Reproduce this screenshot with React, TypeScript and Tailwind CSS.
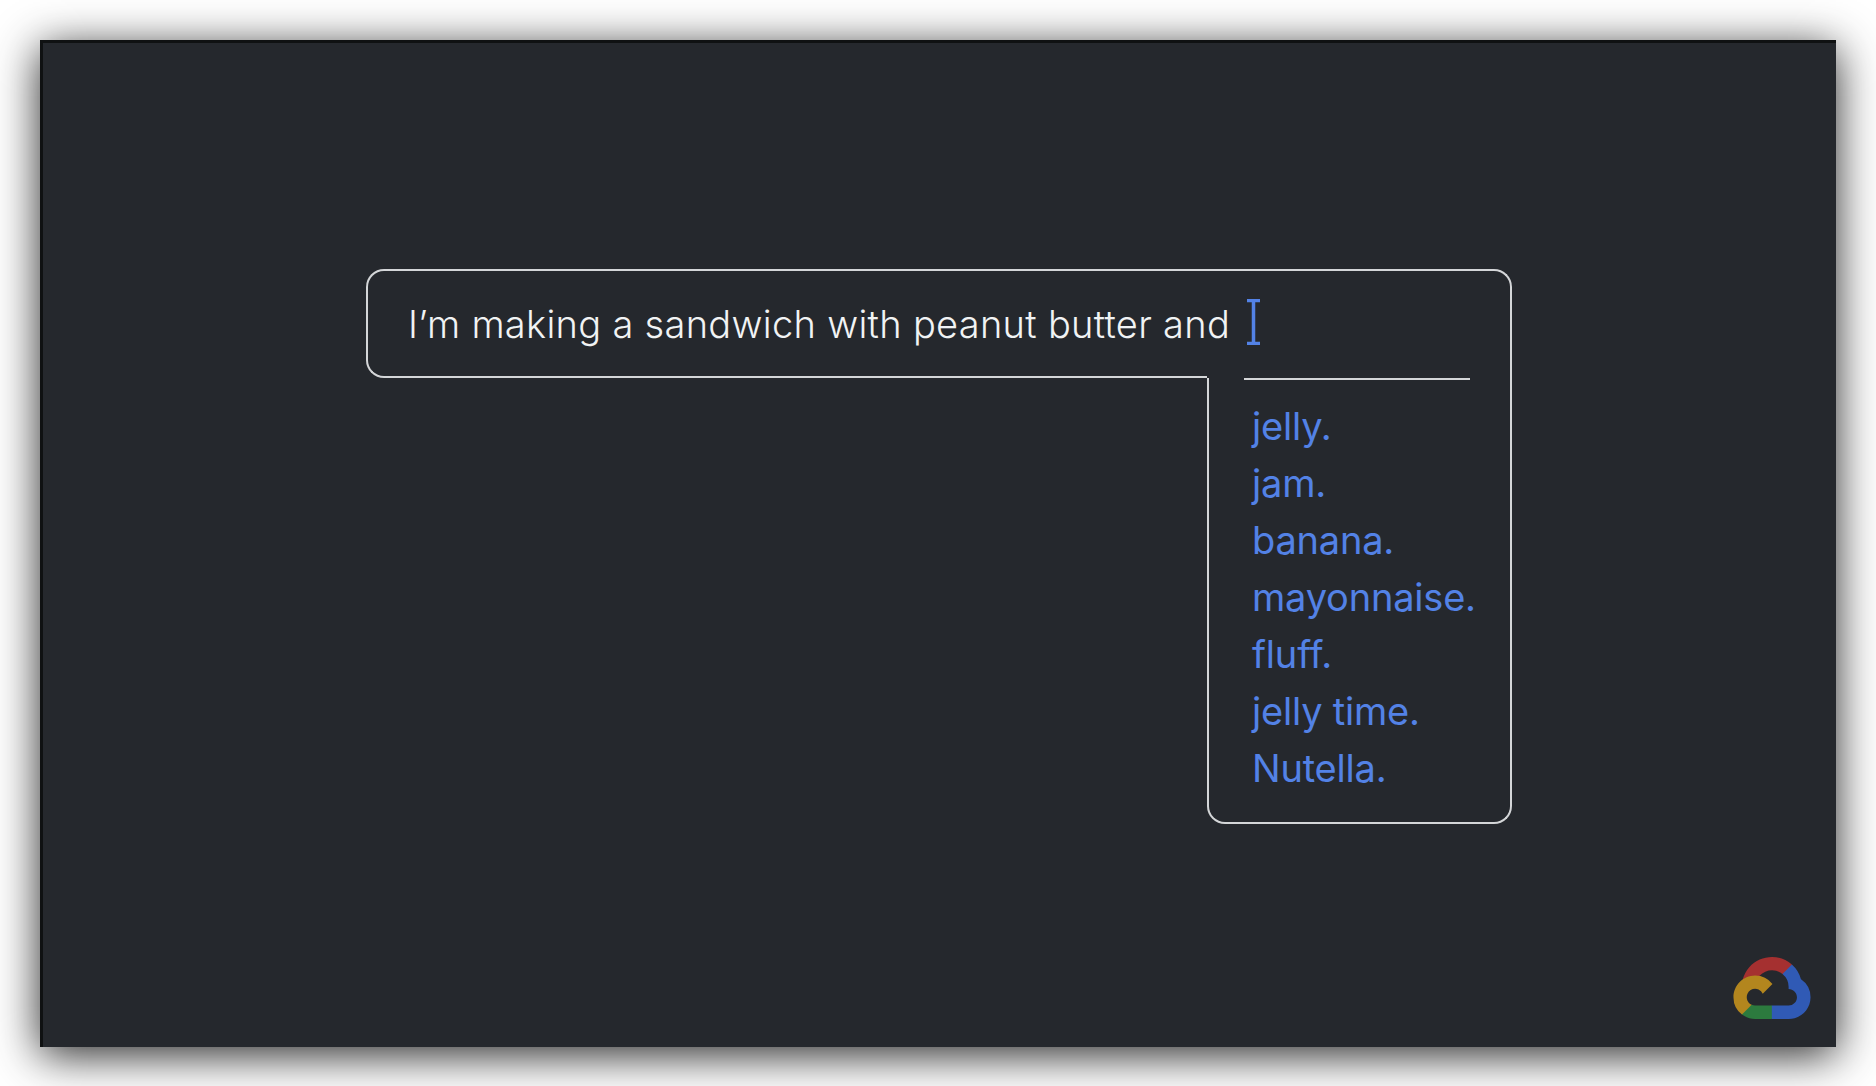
const SUGGESTIONS = ["jelly.", "jam.", "banana.", "mayonnaise.", "fluff.", "jelly time.", "Nutella."];

function CloudLogo() {
  return (
    <svg viewBox="0 0 256 206" className="block h-[62px] w-[78px]">
      <path fill="#a53030" d="M170.252 56.819l22.253-22.253 1.483-9.37C153.437-11.677 88.976-7.496 52.42 33.92 42.267 45.423 34.734 59.764 30.717 74.573l7.97-1.123 44.505-7.34 3.436-3.513c19.797-21.742 53.27-24.667 76.128-6.168l7.496.39z" />
      <path fill="#305ab5" d="M224.205 73.918a100.249 100.249 0 00-30.217-48.722l-31.232 31.232a55.515 55.515 0 0120.379 44.037v5.544c15.35 0 27.797 12.445 27.797 27.796 0 15.352-12.446 27.485-27.797 27.485h-55.671l-5.466 5.934v33.34l5.466 5.231h55.67c39.93.311 72.553-31.494 72.864-71.424a72.303 72.303 0 00-31.493-60.453" />
      <path fill="#2c7a3e" d="M71.87 205.796h55.593V161.29H71.87a27.275 27.275 0 01-11.399-2.498l-7.887 2.42-22.409 22.253-1.952 7.574c12.567 9.489 27.9 14.825 43.647 14.757" />
      <path fill="#b3861e" d="M71.87 61.425C31.94 61.664-.237 94.228.001 134.159a72.301 72.301 0 0028.222 56.88l32.248-32.246c-13.99-6.322-20.208-22.786-13.887-36.776 6.32-13.99 22.786-20.208 36.775-13.888a27.796 27.796 0 0113.887 13.888l32.248-32.248A72.224 72.224 0 0071.87 61.425" />
    </svg>
  );
}

function TextCursor() {
  return (
    <svg viewBox="0 0 13 46" className="block h-[46px] w-[13px]">
      <path d="M0 1.500h13M0 44.500h13M6.500 1.500v43" stroke="#5382e6" strokeWidth="3.500" fill="none" />
    </svg>
  );
}

export default function App() {
  return (
    <div className="h-[1086px] w-full overflow-hidden bg-white p-[40px] font-['Inter',sans-serif]">
      <div className="flex h-[1007px] w-[1796px] flex-col border-t-[3px] border-l-[3px] border-[#0f1112] bg-[#25282d] pt-[226px] pl-[323px] shadow-[0_8px_42px_rgba(0,0,0,0.85)]">
        <div className="w-[1146px]">
          <div className="flex h-[91px] items-start rounded-t-[18px] border-x-2 border-t-2 border-[#d4d6d8] pt-[28px] pl-[40px]">
            <span className="w-[839px] text-[38px] leading-[50px] font-light tracking-[0.3px] whitespace-nowrap text-[#f1f3f4]">I’m making a sandwich with peanut butter and</span>
            <div>
              <TextCursor />
            </div>
          </div>
          <div className="flex">
            <div className="h-[18px] w-[841px] rounded-bl-[18px] border-b-2 border-l-2 border-[#d4d6d8]" />
            <div className="flex flex-1 flex-col">
              <div className="h-[18px] border-r-2 border-[#d4d6d8]" />
              <div className="h-[446px] rounded-b-[18px] border-x-2 border-b-2 border-[#d4d6d8] pl-[43px]">
                <div className="-ml-[8px] h-[2px] w-[226px] bg-[#d4d6d8]" />
                <ul className="mt-[18px] text-[38px] leading-[57px] font-normal tracking-[-0.2px] text-[#5382e6]">
                  {SUGGESTIONS.map((s) => (
                    <li key={s}>{s}</li>
                  ))}
                </ul>
              </div>
            </div>
          </div>
        </div>
        <div className="mt-auto mr-[25px] mb-[28px] self-end">
          <CloudLogo />
        </div>
      </div>
    </div>
  );
}
